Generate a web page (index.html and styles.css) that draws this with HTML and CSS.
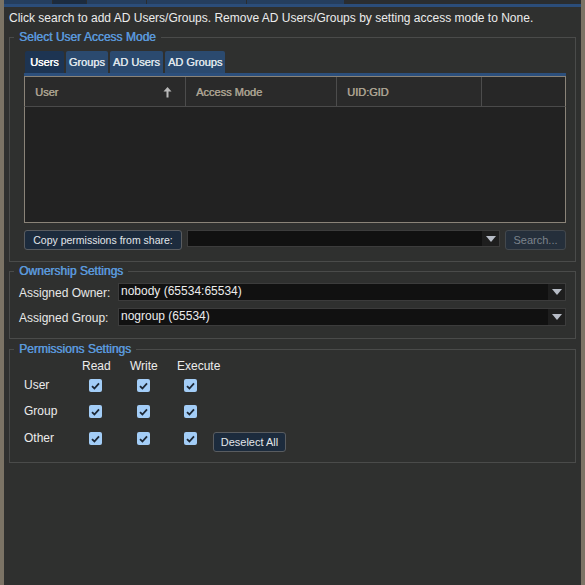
FILE: index.html
```html
<!DOCTYPE html>
<html>

<head>
    <title>Share Permissions</title>
    <meta charset="UTF-8">
    <link rel="stylesheet" href="styles.css">
</head>

<body>
    <div class="app">
        <div class="toptabs">
            <span class="ttab t1"></span>
            <span class="ttab t2 dark"></span>
            <span class="ttab t3"></span>
            <span class="ttab t4"></span>
            <span class="ttab t5"></span>
        </div>

        <p class="intro">Click search to add AD Users/Groups. Remove AD Users/Groups by setting access mode to None.</p>

        <fieldset class="box box_access">
            <legend>Select User Access Mode</legend>
            <div class="inner">
                <div class="tabs">
                    <span class="tab active">Users</span>
                    <span class="tab">Groups</span>
                    <span class="tab">AD Users</span>
                    <span class="tab">AD Groups</span>
                </div>
                <div class="grid">
                    <div class="ghead">
                        <div class="gcol c1">User
                            <svg class="sort" width="9" height="12" viewBox="0 0 9 12">
                                <path d="M4.5 1 L8.5 5.5 L5.5 5.5 L5.5 11.5 L3.5 11.5 L3.5 5.5 L0.5 5.5 Z" fill="#b9b9b9" />
                            </svg>
                        </div>
                        <div class="gcol c2">Access Mode</div>
                        <div class="gcol c3">UID:GID</div>
                        <div class="gcol c4"></div>
                    </div>
                    <div class="gbody"></div>
                </div>
                <div class="copyrow">
                    <button class="btn btn_copy">Copy permissions from share:</button>
                    <div class="select select_share">
                        <span class="value"></span>
                        <span class="arrow"><svg width="10" height="6" viewBox="0 0 10 6"><path d="M0 0 L10 0 L5 6 Z" fill="#b7bcc6" /></svg></span>
                    </div>
                    <button class="btn btn_search" disabled>Search...</button>
                </div>
            </div>
        </fieldset>

        <fieldset class="box box_owner">
            <legend>Ownership Settings</legend>
            <div class="orow">
                <label>Assigned Owner:</label>
                <div class="select">
                    <span class="value">nobody (65534:65534)</span>
                    <span class="arrow"><svg width="10" height="6" viewBox="0 0 10 6"><path d="M0 0 L10 0 L5 6 Z" fill="#b7bcc6" /></svg></span>
                </div>
            </div>
            <div class="orow">
                <label>Assigned Group:</label>
                <div class="select">
                    <span class="value">nogroup (65534)</span>
                    <span class="arrow"><svg width="10" height="6" viewBox="0 0 10 6"><path d="M0 0 L10 0 L5 6 Z" fill="#b7bcc6" /></svg></span>
                </div>
            </div>
        </fieldset>

        <fieldset class="box box_perm">
            <legend>Permissions Settings</legend>
            <div class="perm">
                <span></span>
                <span class="ph">Read</span>
                <span class="ph">Write</span>
                <span class="ph">Execute</span>
                <span></span>

                <span class="pl">User</span>
                <span class="cb"><svg width="9" height="8" viewBox="0 0 9 8"><path d="M1 4.2 L3.4 6.5 L8 1.3" stroke="#1c2735" stroke-width="1.8" fill="none" /></svg></span>
                <span class="cb"><svg width="9" height="8" viewBox="0 0 9 8"><path d="M1 4.2 L3.4 6.5 L8 1.3" stroke="#1c2735" stroke-width="1.8" fill="none" /></svg></span>
                <span class="cb"><svg width="9" height="8" viewBox="0 0 9 8"><path d="M1 4.2 L3.4 6.5 L8 1.3" stroke="#1c2735" stroke-width="1.8" fill="none" /></svg></span>
                <span></span>

                <span class="pl">Group</span>
                <span class="cb"><svg width="9" height="8" viewBox="0 0 9 8"><path d="M1 4.2 L3.4 6.5 L8 1.3" stroke="#1c2735" stroke-width="1.8" fill="none" /></svg></span>
                <span class="cb"><svg width="9" height="8" viewBox="0 0 9 8"><path d="M1 4.2 L3.4 6.5 L8 1.3" stroke="#1c2735" stroke-width="1.8" fill="none" /></svg></span>
                <span class="cb"><svg width="9" height="8" viewBox="0 0 9 8"><path d="M1 4.2 L3.4 6.5 L8 1.3" stroke="#1c2735" stroke-width="1.8" fill="none" /></svg></span>
                <span></span>

                <span class="pl">Other</span>
                <span class="cb"><svg width="9" height="8" viewBox="0 0 9 8"><path d="M1 4.2 L3.4 6.5 L8 1.3" stroke="#1c2735" stroke-width="1.8" fill="none" /></svg></span>
                <span class="cb"><svg width="9" height="8" viewBox="0 0 9 8"><path d="M1 4.2 L3.4 6.5 L8 1.3" stroke="#1c2735" stroke-width="1.8" fill="none" /></svg></span>
                <span class="cb"><svg width="9" height="8" viewBox="0 0 9 8"><path d="M1 4.2 L3.4 6.5 L8 1.3" stroke="#1c2735" stroke-width="1.8" fill="none" /></svg></span>
                <button class="btn btn_deselect">Deselect All</button>
            </div>
        </fieldset>
    </div>
</body>

</html>
```

FILE: styles.css
```css
* {
    margin: 0;
    padding: 0;
    box-sizing: border-box;
}

html,
body {
    height: 100%;
}

body {
    background: #7b7365;
    font-family: "Liberation Sans", Arial, sans-serif;
    font-size: 12px;
    color: #e6e6e6;
}

.app {
    margin: 0 4px;
    height: 100%;
    background: #2f302f;
    overflow: hidden;
}

/* strip of tabs cut at the top */
.toptabs {
    display: flex;
    gap: 1px;
    height: 7px;
    border-bottom: 3px solid #2b4d7a;
    background: #2a2d30;
}

.ttab {
    background: #253e5e;
}

.ttab.dark {
    background: #1c2b3e;
}

.t1 { width: 48px; }
.t2 { width: 33px; }
.t3 { width: 59px; }
.t4 { width: 99px; }
.t5 { width: 97px; }

.intro {
    margin: 4px 0 0 5px;
    line-height: 14px;
    color: #ececec;
}

.box {
    margin: 5px 5px 0 5px;
    border: 1px solid #4a4b4a;
    padding: 0 9px;
}

.box legend {
    margin-left: -5px;
    padding: 0 5px;
    line-height: 14px;
    font-size: 12px;
    color: #5a98da;
    text-shadow: 0.5px 0 0 #5a98da;
}

.box_access {
    padding-top: 7px;
    padding-bottom: 11px;
}

.inner {
    margin-left: 5px;
}

.tabs {
    display: flex;
    gap: 2px;
    height: 22px;
    margin-left: 1px;
}

.tab {
    padding: 0 3px;
    line-height: 23px;
    font-size: 11px;
    background: #2b4a6f;
    color: #dfe4ea;
    text-shadow: 0.4px 0 0 #dfe4ea;
    border-radius: 2px 2px 0 0;
}

.tab.active {
    padding: 0 5px;
    background: #1d3452;
    color: #ffffff;
    text-shadow: 0.4px 0 0 #ffffff;
}

.grid {
    border-top: 3px solid #2c4f7c;
}

.ghead {
    display: grid;
    grid-template-columns: 161px 151px 145px 1fr;
    border: 1px solid #8a8378;
    border-bottom: 1px solid #4a4a4a;
    height: 31px;
    background: #2a2a2a;
}

.gcol {
    display: flex;
    align-items: center;
    justify-content: space-between;
    padding: 0 10px;
    font-size: 11px;
    color: #aba291;
    text-shadow: 0.5px 0 0 #aba291;
    border-right: 1px solid #4c4c4c;
}

.gcol.c1 {
    padding-right: 13px;
}

.gcol.c4 {
    border-right: none;
    background: #272727;
}

.gbody {
    height: 116px;
    background: #222222;
    border: 1px solid #8a8378;
    border-top: none;
}

.copyrow {
    display: flex;
    align-items: flex-start;
    margin-top: 7px;
}

.btn {
    font-family: "Liberation Sans", Arial, sans-serif;
    font-size: 11px;
    height: 20px;
    padding: 0 8px;
    border: 1px solid #595c60;
    border-radius: 3px;
    background: #1c2b3d;
    color: #e2e6ea;
}

.btn_copy {
    width: 158px;
    padding: 0;
    font-size: 10.5px;
}

.btn_search {
    width: 61px;
    padding: 0;
    margin-left: 5px;
    background: #252f3b;
    border-color: #43484d;
    color: #7c838b;
}

.select {
    display: flex;
    height: 18px;
    border: 1px solid #3c3c3c;
    background: #111111;
}

.select .value {
    flex: 1;
    padding-left: 2px;
    line-height: 15px;
    color: #ececec;
}

.select .arrow {
    width: 17px;
    display: flex;
    align-items: center;
    justify-content: center;
    background: #1e1e1e;
}

.select_share {
    flex: 1;
    height: 17px;
    margin-left: 5px;
}

.box_owner {
    margin-top: 2px;
    padding-top: 5px;
    padding-bottom: 12px;
}

.orow {
    display: flex;
    align-items: center;
}

.orow + .orow {
    margin-top: 7px;
}

.orow label {
    width: 99px;
    padding-top: 2px;
    color: #e8e8e8;
}

.orow .select {
    flex: 1;
}

.box_perm {
    margin-top: 3px;
    padding-top: 3px;
    padding-bottom: 10px;
}

.perm {
    display: grid;
    grid-template-columns: 58px 48px 47px 36px auto;
    grid-template-rows: 14px 25px 27px 27px;
    align-items: center;
    margin-left: 5px;
}

.ph {
    line-height: 14px;
    white-space: nowrap;
    color: #ececec;
}

.pl {
    color: #ececec;
    padding-bottom: 1px;
}

.cb {
    width: 13px;
    height: 13px;
    margin-left: 7px;
    border-radius: 2px;
    background: #a3cdf7;
    display: flex;
    align-items: center;
    justify-content: center;
}

.btn_deselect {
    justify-self: start;
    align-self: end;
    width: 73px;
    padding: 0;
}
```
